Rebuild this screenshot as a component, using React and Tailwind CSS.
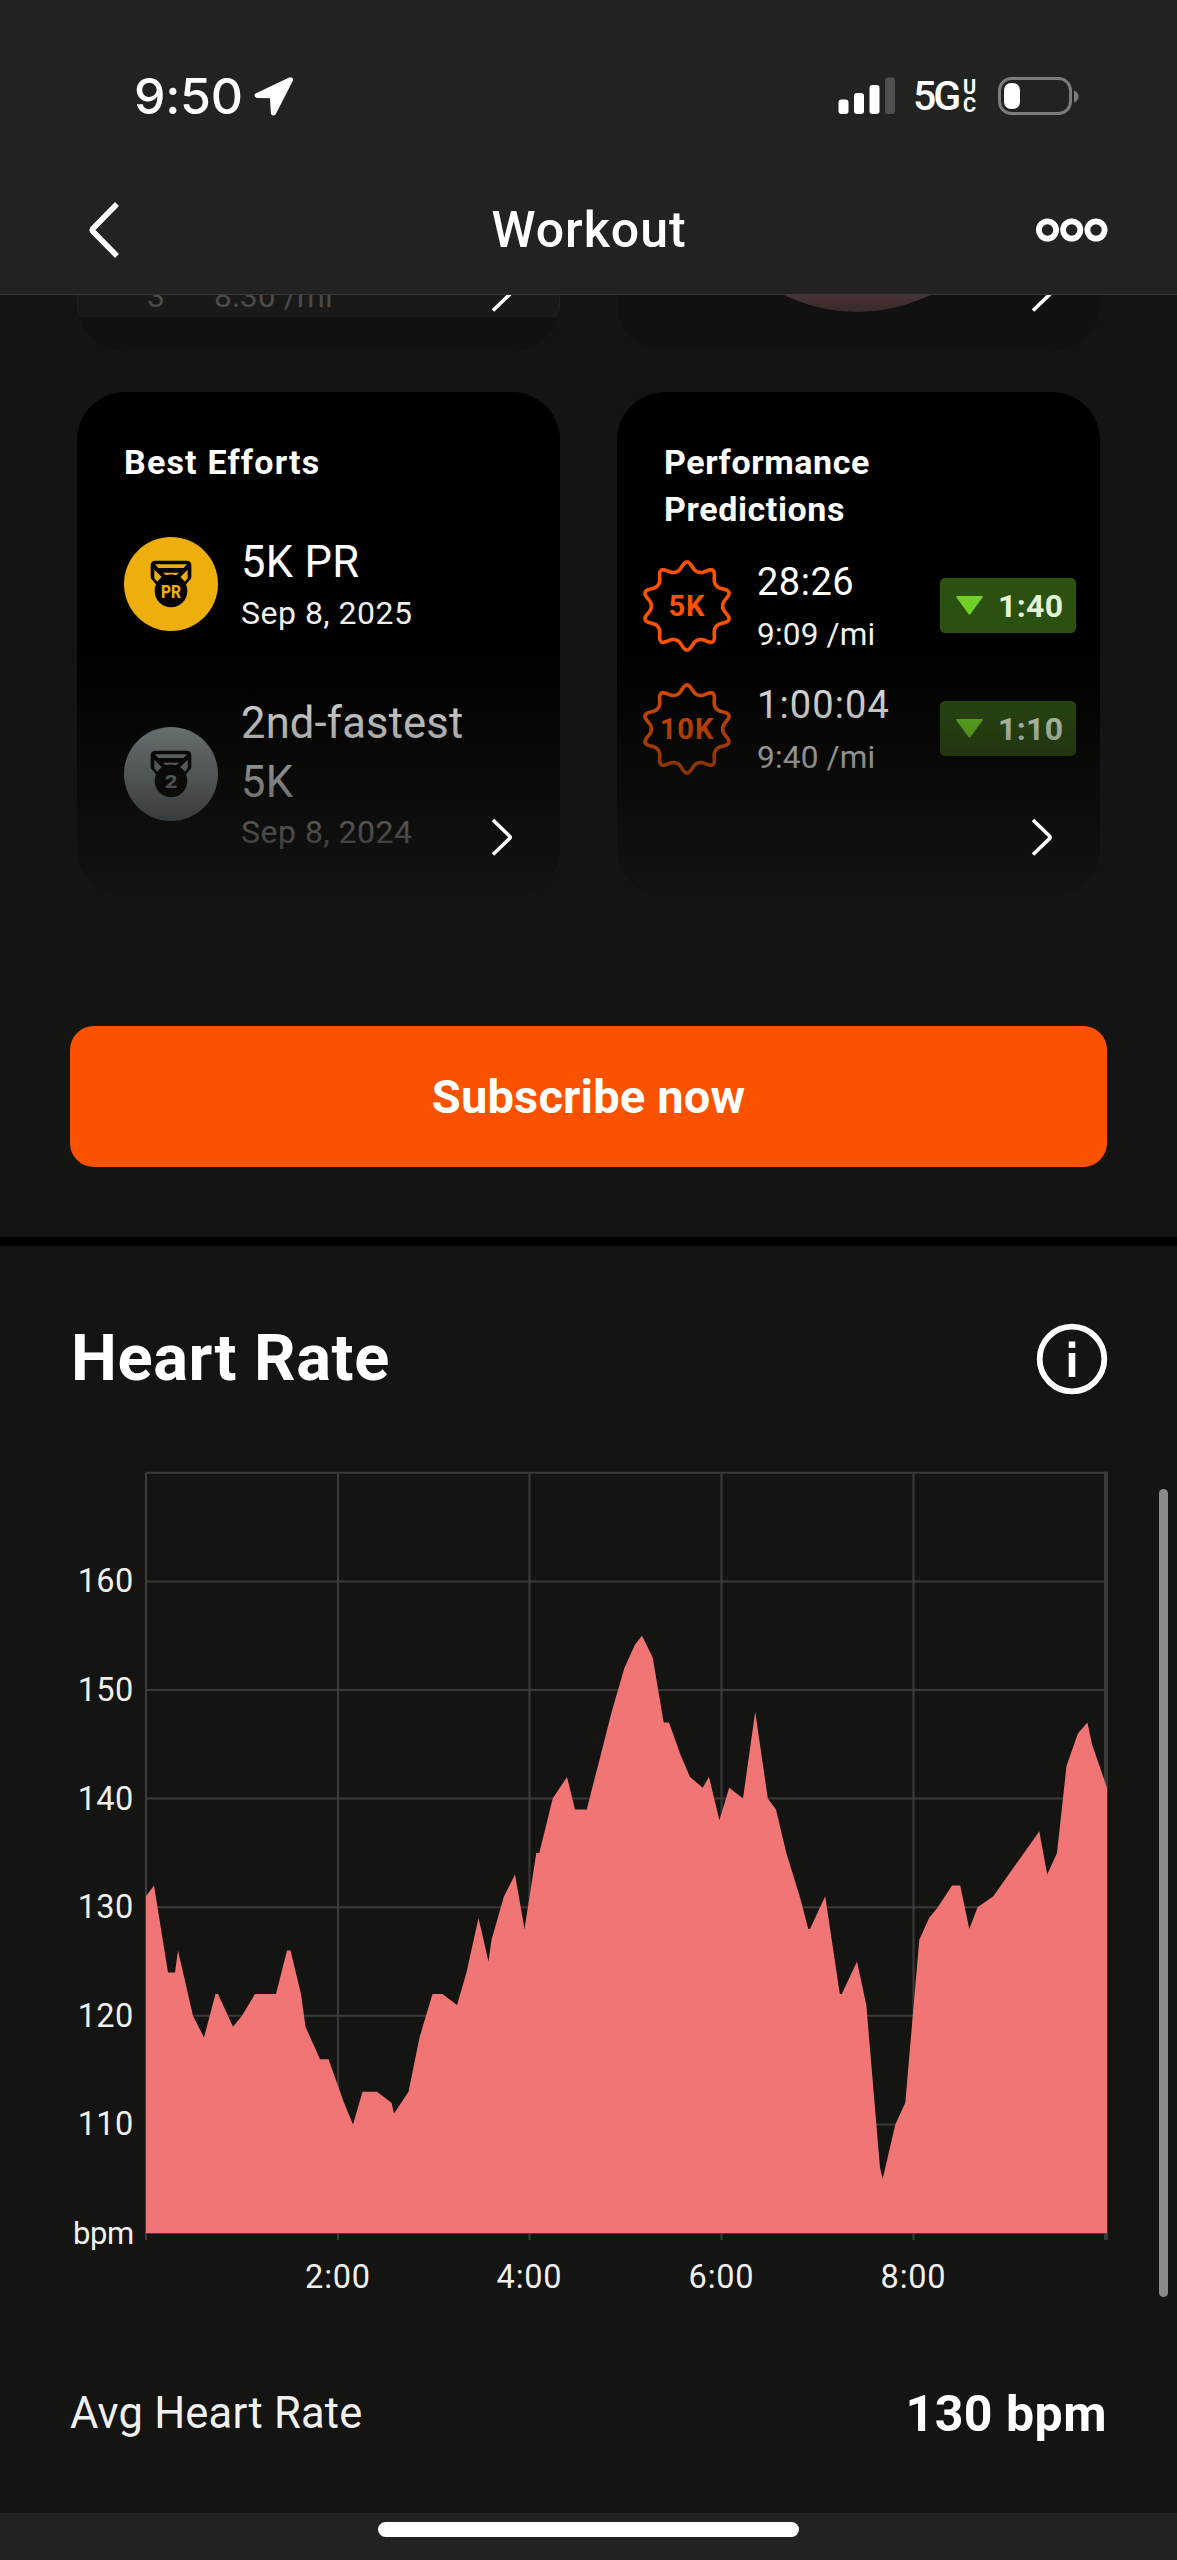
const SERIES = [
  [146, 131], [154, 132], [168, 124], [175, 124], [178, 126], [193, 120], [204, 118], [215.5, 122], [218, 122],
  [233, 119], [242, 120], [255, 122], [276, 122], [287, 126], [290.5, 126], [301, 122], [305.5, 119], [320, 116],
  [328.5, 116], [344, 112], [353, 110], [362.5, 113], [377, 113], [391.5, 112], [394, 111], [408.5, 113],
  [419.5, 118], [432.5, 122], [442.5, 122], [457, 121], [466.5, 124], [478.5, 129], [488.5, 125], [491.5, 127],
  [504, 131], [515, 133], [524.5, 128], [536.3, 135], [539.3, 135], [552.7, 140], [567, 142], [575, 139],
  [586.7, 139], [599, 143.4], [611.7, 148], [624.3, 152], [635, 154.2], [642, 155], [652.7, 153], [663.7, 147],
  [669, 147], [680.7, 144], [690, 142], [702.7, 141], [709, 142], [719.4, 138], [729.2, 141], [743, 140],
  [755.2, 148], [767.8, 140], [776, 139], [786.3, 135], [799.7, 131], [808.3, 128], [810, 128], [825.2, 131],
  [839.8, 122], [841.8, 122], [857, 125], [866.3, 121], [880, 106], [882.7, 105], [895.3, 110], [905.3, 112],
  [919.3, 127], [929.1, 129], [937.8, 130], [952, 132], [960.2, 132], [969.3, 128], [977.6, 130], [993.3, 131],
  [1039.3, 137], [1047.2, 133], [1057, 135], [1066.5, 143], [1077.9, 146], [1087.4, 147], [1092, 145], [1107, 141],
];

const CHART_LEFT = 70;
const px = (x) => x - CHART_LEFT;
const py = (bpm) => 763 - (bpm - 100) * 10.86;

function HeartChart() {
  const line = SERIES.map(([x, b]) => `${px(x)},${py(b).toFixed(1)}`).join(" ");
  const cols = [[338, "2:00"], [529.5, "4:00"], [721.5, "6:00"], [913.5, "8:00"]];
  return (
    <svg className="block h-[840px] w-[1040px]" viewBox="0 0 1040 840" fontFamily="Roboto, sans-serif" fontSize="32.5" fill="#f0f0ee">
      {[110, 120, 130, 140, 150, 160, 170].map((b) => (
        <line key={b} x1={px(146)} x2={px(1107)} y1={py(b)} y2={py(b)} stroke="#3a3a38" strokeWidth="2" />
      ))}
      <line x1={px(146)} x2={px(146)} y1={py(170)} y2="770" stroke="#3e3e3c" strokeWidth="2" />
      {cols.map(([x, label]) => (
        <g key={label}>
          <line x1={px(x)} x2={px(x)} y1={py(170)} y2="770" stroke="#3a3a38" strokeWidth="2" />
          <text x={px(x)} y="818" textAnchor="middle" letterSpacing="0.8">{label}</text>
        </g>
      ))}
      <line x1={px(1106)} x2={px(1106)} y1={py(170) - 1} y2="770" stroke="#3a3a38" strokeWidth="4" />
      <polygon points={`${px(146)},763 ${line} ${px(1107)},763`} fill="#f07574" />
      <line x1={px(146)} x2={px(1107)} y1="763.5" y2="763.5" stroke="#424240" strokeWidth="1" />
      {[110, 120, 130, 140, 150, 160].map((b) => (
        <text key={b} x="63.5" y={py(b) + 11} textAnchor="end" letterSpacing="0.3">{b}</text>
      ))}
      <text x="64" y="773.5" textAnchor="end" fontSize="31" letterSpacing="-0.3">bpm</text>
    </svg>
  );
}

function ChevronRight() {
  return (
    <svg className="block h-[42px] w-[24px]" viewBox="0 0 24 42" fill="none" stroke="#fff" strokeWidth="3.6">
      <path d="M3 4 L19.5 20 Q21 21.3 19.5 22.6 L3 38.500" />
    </svg>
  );
}

function Medal({ color, label, width, x }) {
  return (
    <svg className="block size-[94px] shrink-0" viewBox="12 15 282 282">
      <circle cx="153" cy="156" r="141" fill={color} />
      <path d="M92 100 q0-14 14-14 H200 q14 0 14 14 V134 Q214 139 211 142 L197 158 H109 L95 142 Q92 139 92 134Z" fill="#000" />
      <path d="M105 97 H201 L191 108 H115Z M129 122 H177 L168 130 Q153 125 138 130Z M103 113 V139 L112 149 L125 135Z M203 113 V139 L194 149 L181 135Z" fill={color} />
      <circle cx="153" cy="177" r="49" fill="#000" />
      <text x={x} y="199" fontFamily="Roboto, sans-serif" fontWeight="800" fontSize="57" textLength={width} lengthAdjust="spacingAndGlyphs" fill={color}>{label}</text>
    </svg>
  );
}

const badgePoint = (i, r) => {
  const a = (i * Math.PI) / 180;
  return [46 + r * Math.sin(a), 47 - r * Math.cos(a)];
};
const BADGE_PATH =
  Array.from({ length: 180 }, (_, i) => {
    const deg = i * 2;
    const wave = Math.cos((deg * 10 * Math.PI) / 180);
    const [x, y] = badgePoint(deg, 39.2 + 4.2 * wave + 0.7 * Math.cos((deg * 20 * Math.PI) / 180));
    return `${i ? "L" : "M"}${x.toFixed(2)} ${y.toFixed(2)}`;
  }).join("") + "Z";

function Badge({ label }) {
  return (
    <svg className="block h-[94px] w-[92px] shrink-0" viewBox="0 0 92 94">
      <path d={BADGE_PATH} fill="none" stroke="#fc5200" strokeWidth="3.600" strokeLinejoin="round" />
      <text x="46" y="56.500" textAnchor="middle" fontFamily="Roboto, sans-serif" fontWeight="700" fontSize="29" letterSpacing="1" fill="#fc5200">{label}</text>
    </svg>
  );
}

function Prediction({ dist, time, pace, gain, spacing }) {
  return (
    <div className="flex h-[123px] items-start">
      <Badge label={dist} />
      <div className="w-[207px] pl-[24px] pt-[2px]">
        <div className={`h-[42px] text-[38px] leading-[42px] ${spacing}`}>{time}</div>
        <div className="mt-[12px] h-[40px] text-[31.500px] leading-[40px] tracking-[0.200px] text-[#f0f0ee]">{pace}</div>
      </div>
      <div className="mt-[19px] flex h-[55px] w-[136px] items-center rounded-[5px] bg-[#2c5010] pl-[16px]">
        <svg className="h-[19px] w-[27px]" viewBox="0 0 27 19"><path d="M1 0 H26 Q27.500 0 26.500 1.500 L14.500 18 Q13.500 19 12.500 18 L.5 1.500 Q-.5 0 1 0Z" fill="#70d024" /></svg>
        <span className="ml-[15px] text-[32px] font-bold leading-none tracking-[0.300px] text-[#e3f5d5]">{gain}</span>
      </div>
    </div>
  );
}

function Card({ children }) {
  return (
    <div className="relative h-[503px] w-[483px] overflow-hidden rounded-[48px] bg-black">
      {children}
      <div className="absolute inset-x-0 bottom-0 h-[248px] bg-linear-to-b from-[#131311]/0 to-[#131311]" />
      <div className="absolute bottom-[37px] right-[46px]"><ChevronRight /></div>
    </div>
  );
}

export default function App() {
  return (
    <div className="relative flex h-[2560px] w-[1177px] flex-col overflow-hidden bg-[#141412] font-['Roboto',sans-serif] text-white">
      <header className="h-[295px] shrink-0 border-b border-[#373735] bg-[#222220]">
        <div className="flex h-[192px] items-center justify-between pl-[134px] pr-[97px]">
          <div className="flex items-center">
            <span className="font-['Inter',sans-serif] text-[50px] font-medium leading-none tracking-[-0.300px]">9:50</span>
            <svg className="ml-[9px] h-[42px] w-[42px]" viewBox="0 0 40 42" preserveAspectRatio="none">
              <path d="M36.500 4.800 L5 20.500 L19.500 20.800 L20.500 38Z" fill="#fff" stroke="#fff" strokeWidth="5" strokeLinejoin="round" />
            </svg>
          </div>
          <div className="flex items-center">
            <svg className="h-[38px] w-[58px]" viewBox="0 0 58 38" fill="#fff">
              <rect x="0.500" y="22.500" width="10" height="14.500" rx="3" />
              <rect x="16" y="16" width="10" height="21" rx="3" />
              <rect x="31.500" y="8" width="10" height="29" rx="3" />
              <rect x="47" y="0.500" width="10" height="36.500" rx="3" fill="#4e4e4d" />
            </svg>
            <span className="ml-[17px] w-[50px] text-[41px] font-medium leading-none tracking-[-3px]">5G</span>
            <span className="flex w-[35px] flex-col text-[20px] font-bold leading-[18px]"><span>U</span><span>C</span></span>
            <svg className="h-[40px] w-[82px]" viewBox="0 0 82 40">
              <rect x="1.500" y="2.500" width="71" height="35" rx="12" fill="none" stroke="#7c7c7b" strokeWidth="3" />
              <rect x="6" y="7" width="16" height="26" rx="7" fill="#fff" />
              <path d="M76 14.500 Q80.500 16.500 80.500 20.500 Q80.500 24.500 76 26.500Z" fill="#7c7c7b" />
            </svg>
          </div>
        </div>
        <div className="flex h-[75px] items-center justify-between pl-[87px] pr-[68px]">
          <svg className="h-[60px] w-[56px]" viewBox="0 0 56 60" fill="none" stroke="#fff" strokeWidth="5.500">
            <path d="M30 4 L6 28.500 Q4.600 30 6 31.500 L30 56" />
          </svg>
          <h1 className="text-[50px] font-medium leading-none tracking-[1px]">Workout</h1>
          <svg className="h-[26px] w-[74px]" viewBox="0 0 74 26" fill="none" stroke="#fff" strokeWidth="5.800">
            <circle cx="12.500" cy="13" r="8.600" /><circle cx="36.700" cy="13" r="8.600" /><circle cx="61" cy="13" r="8.600" />
          </svg>
        </div>
      </header>

      <main className="flex h-[942px] shrink-0 flex-col">
        <div className="flex gap-[57px] px-[77px]">
          <div className="relative h-[56px] w-[483px] overflow-hidden rounded-b-[48px] bg-[#11110f]">
            <div className="flex h-[22px] overflow-hidden border-x border-[#232321] bg-[#191917] text-[32px] leading-[36px] text-[#4a4a48]">
              <span className="-mt-[17px] ml-[69px] w-[67px]">3</span>
              <span className="-mt-[17px]">8:30 /mi</span>
            </div>
            <div className="absolute bottom-[37px] right-[46px]"><ChevronRight /></div>
          </div>
          <div className="relative h-[56px] w-[483px] overflow-hidden rounded-b-[48px] bg-[#11110f]">
            <svg className="ml-[150px] block h-[18px] w-[180px]" viewBox="0 0 180 18">
              <defs><linearGradient id="dial" x1="0" y1="0" x2="0" y2="1"><stop offset="0.940" stopColor="#4a3535" /><stop offset="1" stopColor="#382929" /></linearGradient></defs>
              <circle cx="90" cy="-149" r="166" fill="url(#dial)" />
            </svg>
            <div className="absolute bottom-[37px] right-[46px]"><ChevronRight /></div>
          </div>
        </div>

        <div className="mt-[41px] flex gap-[57px] px-[77px]">
          <Card>
            <h2 className="pl-[47px] pt-[47px] text-[34px] font-bold leading-[47px] tracking-[1.200px]">Best Efforts</h2>
            <div className="mt-[51px] flex h-[94px] items-center pl-[47px]">
              <Medal color="#eeae0c" label="PR" width="60" x="123" />
              <div className="ml-[23px] pt-[4px]">
                <div className="text-[43.500px] leading-[54px] tracking-[0.300px]">5K PR</div>
                <div className="text-[32px] leading-[46px] tracking-[0.500px] text-[#f0f0ee]">Sep 8, 2025</div>
              </div>
            </div>
            <div className="mt-[54px] flex h-[160px] items-center pl-[47px]">
              <div className="mt-[18px]"><Medal color="#8f9a9c" label="2" width="38" x="134" /></div>
              <div className="ml-[23px] mt-[17px]">
                <div className="text-[43.500px] leading-[59px] tracking-[0.200px]">2nd-fastest<br />5K</div>
                <div className="text-[32px] leading-[41px] tracking-[0.500px] text-[#f0f0ee]">Sep 8, 2024</div>
              </div>
            </div>
          </Card>
          <Card>
            <h2 className="pl-[47px] pt-[47px] text-[34px] font-bold leading-[46.500px] tracking-[0.600px]">Performance<br />Predictions</h2>
            <div className="mt-[27px] pl-[24px]">
              <Prediction dist="5K" time="28:26" pace="9:09 /mi" gain="1:40" spacing="tracking-[0.500px]" />
              <Prediction dist="10K" time="1:00:04" pace="9:40 /mi" gain="1:10" spacing="tracking-[1.100px]" />
            </div>
          </Card>
        </div>

        <button className="ml-[70px] mt-[131px] h-[141px] w-[1037px] rounded-[24px] bg-[#fc5200] text-[47px] font-bold leading-none tracking-[0.200px]">Subscribe now</button>
      </main>

      <div className="h-[9px] shrink-0 bg-black" />

      <section className="flex h-[1267px] shrink-0 flex-col">
        <div className="mt-[77px] flex h-[72px] items-center justify-between pl-[71px] pr-[69px]">
          <h2 className="-mt-[2px] text-[65px] font-bold leading-none tracking-[0.600px]">Heart Rate</h2>
          <svg className="size-[72px]" viewBox="0 0 72 72">
            <circle cx="36" cy="36" r="32.300" fill="none" stroke="#fff" strokeWidth="5.800" />
            <rect x="32.700" y="18.500" width="6.600" height="6.300" fill="#fff" />
            <rect x="32.700" y="30" width="6.600" height="24" fill="#fff" />
          </svg>
        </div>
        <div className="mt-[75px] pl-[70px]"><HeartChart /></div>
        <div className="mt-[74px] flex h-[60px] items-center justify-between pl-[70px] pr-[70px]">
          <span className="text-[43.500px] leading-none tracking-[0.200px] text-[#f0f0ee]">Avg Heart Rate</span>
          <span className="text-[50px] font-bold leading-none tracking-[0.500px]">130 bpm</span>
        </div>
      </section>

      <footer className="flex flex-1 justify-center bg-[#222220] pt-[9px]">
        <div className="h-[15px] w-[421px] rounded-full bg-white" />
      </footer>

      <div className="absolute right-[9px] top-[1489px] h-[808px] w-[9px] rounded-full bg-[#8a8a89]" />
    </div>
  );
}
